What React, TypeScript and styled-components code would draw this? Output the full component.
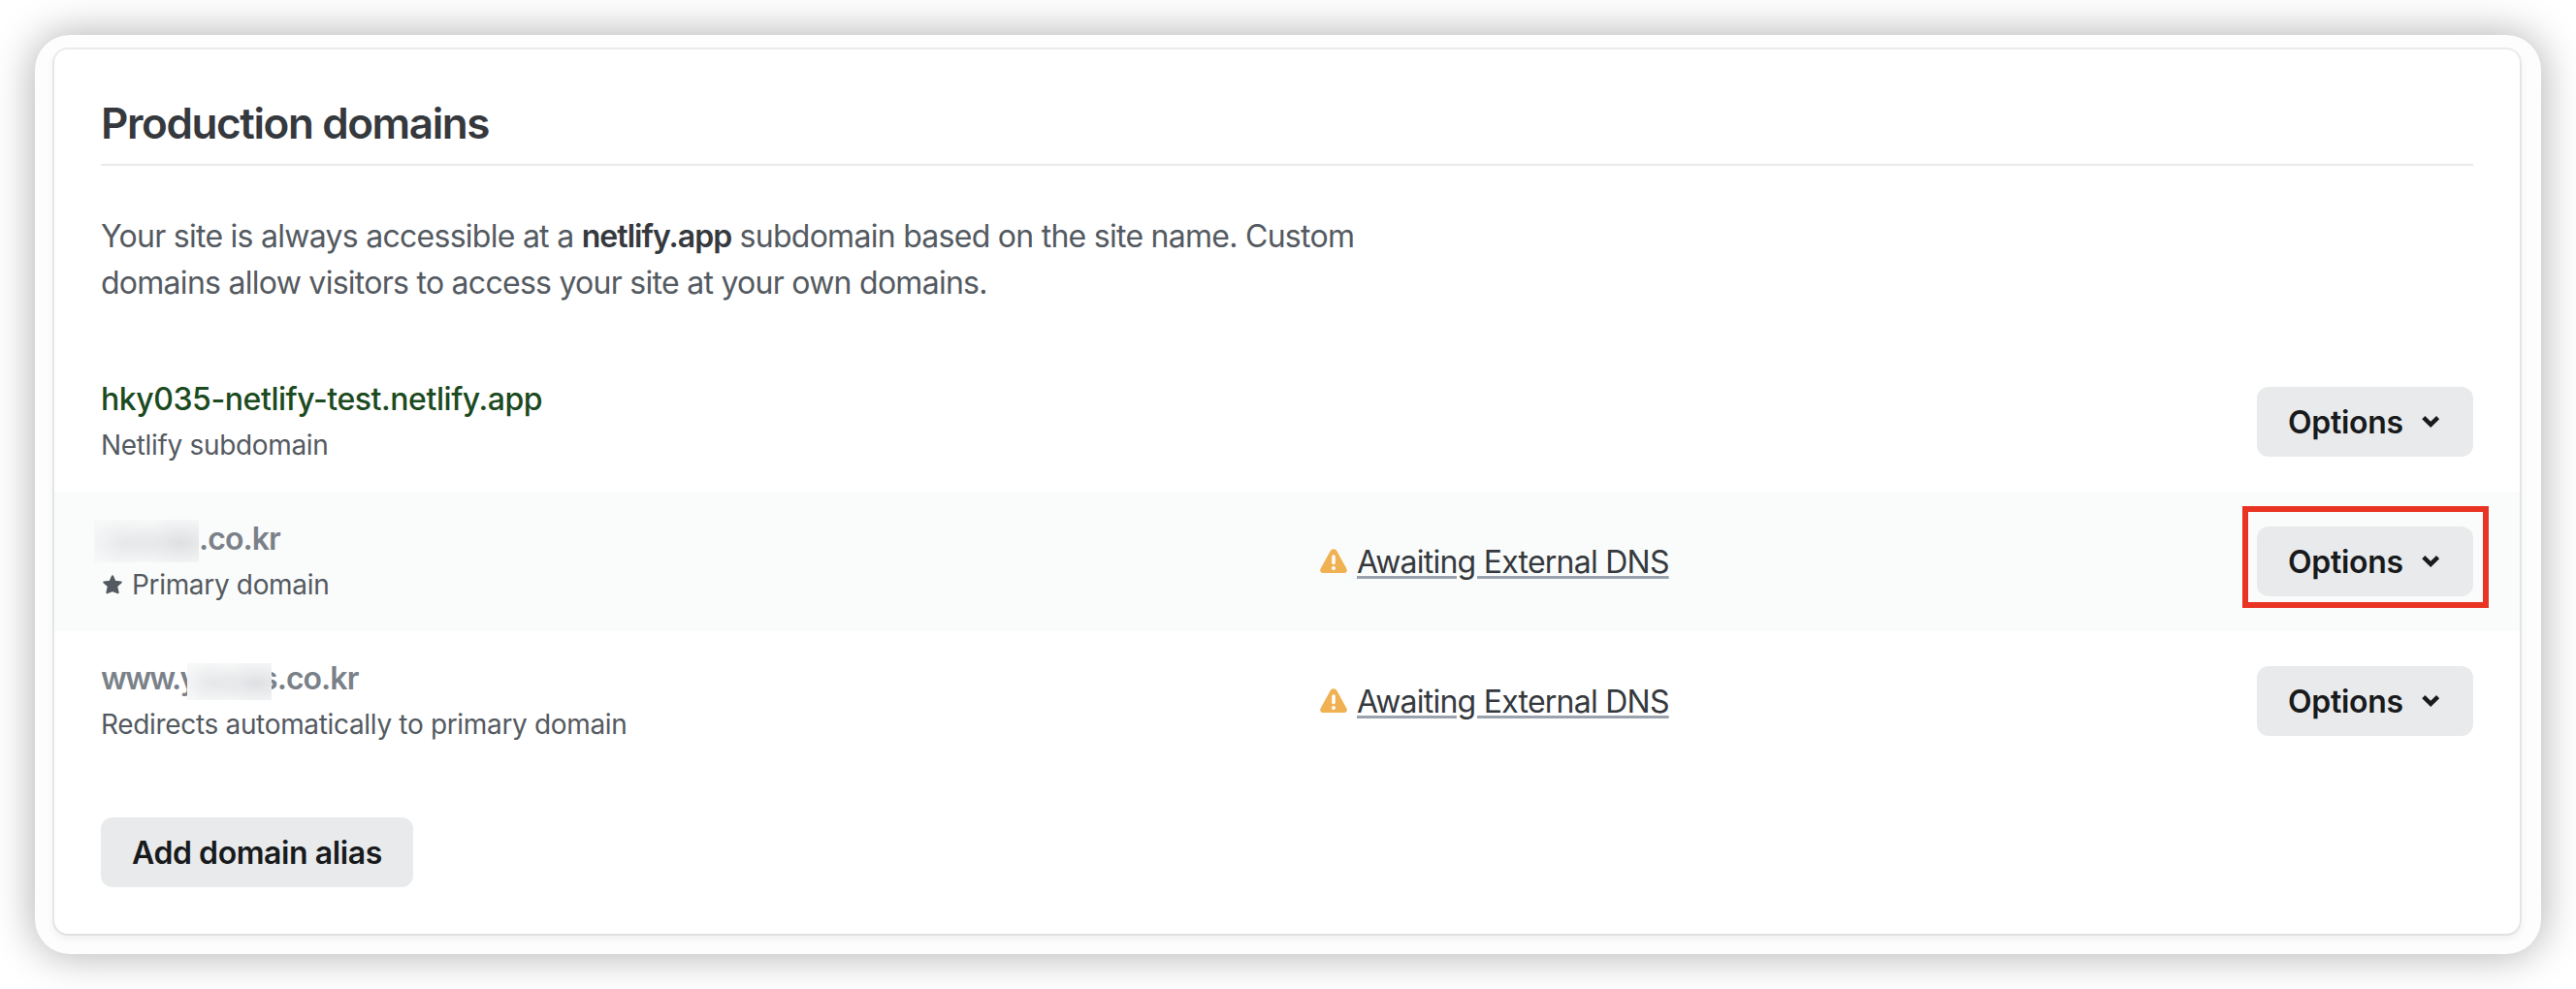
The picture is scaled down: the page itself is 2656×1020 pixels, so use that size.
import React from "react";
import styled, { createGlobalStyle } from "styled-components";

const GlobalStyle = createGlobalStyle`
  *, *::before, *::after { box-sizing: border-box; }
  body {
    margin: 0;
    background: #fff;
    font-family: Inter, "Liberation Sans", sans-serif;
    font-size: 32px;
    line-height: 48px;
    color: #545a61;
  }
`;

const Page = styled.div`
  height: 1020px;
  padding: 36px;
  overflow: hidden;
`;

const Frame = styled.div`
  height: 948px;
  padding: 15px 22px 21px 20px;
  border-radius: 36px;
  background: #fdfdfd;
  box-shadow: 0 0 44px rgba(0, 0, 0, 0.33);
`;

const Card = styled.section`
  display: flex;
  flex-direction: column;
  height: 912px;
  border-radius: 14px;
  background: #fff;
  box-shadow: 0 0 0 2px rgba(14, 30, 37, 0.07), 0 4px 8px rgba(14, 30, 37, 0.08);
`;

const Header = styled.header`
  margin: 0 48px;
  height: 120px;
  padding-top: 48px;
  border-bottom: 2px solid #e9ebeb;
`;

const Title = styled.h2`
  margin: 0;
  font-size: 44px;
  line-height: 56px;
  font-weight: 600;
  letter-spacing: -1.4px;
  color: #35393e;
`;

const Intro = styled.p`
  margin: 49px 48px 0;
  width: 1320px;
  height: 143px;
  letter-spacing: -0.73px;
`;

const Strong = styled.strong`
  font-weight: 600;
  letter-spacing: -0.95px;
  color: #35393e;
`;

const List = styled.ul`
  margin: 0;
  padding: 0;
  list-style: none;
`;

const Row = styled.li<{ $tinted?: boolean }>`
  display: grid;
  grid-template-columns: 1257px 1fr auto;
  align-items: center;
  height: 144px;
  padding: 0 48px;
  background: ${(p) => (p.$tinted ? "#fafcfb" : "transparent")};
`;

const Name = styled.div<{ $live?: boolean }>`
  display: flex;
  height: 48px;
  font-weight: ${(p) => (p.$live ? 500 : 600)};
  letter-spacing: ${(p) => (p.$live ? "-0.45px" : "-0.95px")};
  color: ${(p) => (p.$live ? "#1c4a20" : "#7a8189")};
`;

const Note = styled.div`
  display: flex;
  align-items: center;
  gap: 8px;
  height: 46px;
  font-size: 28px;
  letter-spacing: -0.33px;
`;

const Redacted = styled.span<{ $width: number }>`
  position: relative;
  width: ${(p) => p.$width}px;
  letter-spacing: -1.7px;
`;

const Smudge = styled.span<{ $left: number; $top: number; $width: number; $height: number; $base: string }>`
  position: absolute;
  left: ${(p) => p.$left}px;
  top: ${(p) => p.$top}px;
  width: ${(p) => p.$width}px;
  height: ${(p) => p.$height}px;
  background:
    radial-gradient(ellipse 36% 56% at 30% 54%, rgba(216, 218, 222, 0.55), transparent),
    radial-gradient(ellipse 52% 60% at 82% 54%, rgba(212, 214, 218, 0.7), transparent),
    ${(p) => p.$base};
`;

const Status = styled.div`
  display: flex;
  align-items: center;
  gap: 10px;
`;

const StatusLink = styled.a`
  padding-top: 1px;
  letter-spacing: -0.76px;
  color: #35393e;
  text-decoration: underline;
  text-decoration-color: #9ba4ae;
  text-decoration-thickness: 3px;
  text-underline-offset: 3px;
`;

const Button = styled.button`
  display: inline-flex;
  align-items: center;
  height: 72px;
  padding: 0 32px;
  border: 0;
  border-radius: 12px;
  background: #e9eaec;
  font: inherit;
  font-weight: 600;
  letter-spacing: -0.42px;
  color: #181a1c;
`;

const ButtonLabel = styled.span`
  padding-top: 1px;
`;

const OptionsSlot = styled.div`
  position: relative;
  display: flex;
  grid-column: 3;

  ${Button} {
    width: 223px;
    justify-content: space-between;
    letter-spacing: -0.3px;
  }
`;

const Highlight = styled.span`
  position: absolute;
  left: -15px;
  top: -21px;
  width: 254px;
  height: 105px;
  border: 6px solid #e93323;
`;

const Footer = styled.footer`
  padding: 48px;
`;

const Chevron = () => (
  <svg width="24" height="24" viewBox="0 0 24 24" fill="none" stroke="#181a1c" strokeWidth="4.4">
    <path d="M4.8 7.6 12.2 14.9 19.6 7.6" />
  </svg>
);

const Star = () => (
  <svg width="24" height="24" viewBox="0 0 24 24" fill="#545a61" stroke="#545a61" strokeWidth="2" strokeLinejoin="round">
    <path d="M12 3.2 14.6 8.8 20.8 9.4 16.2 13.6 17.7 20.2 12 18 6.3 20.2 7.8 13.6 3.2 9.4 9.4 8.8Z" />
  </svg>
);

const Warning = () => (
  <svg width="28" height="26" viewBox="0 0 28 26">
    <path d="M10.5 2.4C12-.4 16-.4 17.5 2.4L27.4 20.5C28.6 23 27.3 25 25 25H3C.7 25-.6 23 .6 20.5Z" fill="#efb152" />
    <path d="M14 8V14.5" stroke="#fff" strokeWidth="3.6" strokeLinecap="round" />
    <circle cx="14" cy="20" r="2" fill="#fff" />
  </svg>
);

const Options = ({ highlighted }: { highlighted?: boolean }) => (
  <OptionsSlot>
    <Button>
      <ButtonLabel>Options</ButtonLabel>
      <Chevron />
    </Button>
    {highlighted && <Highlight />}
  </OptionsSlot>
);

const AwaitingDns = () => (
  <Status>
    <Warning />
    <StatusLink>Awaiting External DNS</StatusLink>
  </Status>
);

export default function App() {
  return (
    <Page>
      <GlobalStyle />
      <Frame>
        <Card>
          <Header>
            <Title>Production domains</Title>
          </Header>
          <Intro>
            Your site is always accessible at a <Strong>netlify.app</Strong> subdomain based on the site name. Custom
            domains allow visitors to access your site at your own domains.
          </Intro>
          <List>
            <Row>
              <div>
                <Name $live>hky035-netlify-test.netlify.app</Name>
                <Note>Netlify subdomain</Note>
              </div>
              <Options />
            </Row>
            <Row $tinted>
              <div>
                <Name>
                  <Redacted $width={101}>
                    <Smudge $left={-7} $top={4} $width={108} $height={44} $base="#f6f8f8" />
                  </Redacted>
                  .co.kr
                </Name>
                <Note>
                  <Star />
                  Primary domain
                </Note>
              </div>
              <AwaitingDns />
              <Options highlighted />
            </Row>
            <Row>
              <div>
                <Name>
                  <Redacted $width={165}>
                    www.y
                    <Smudge $left={89} $top={8} $width={87} $height={38} $base="#f6f7f7" />
                  </Redacted>
                  s.co.kr
                </Name>
                <Note>Redirects automatically to primary domain</Note>
              </div>
              <AwaitingDns />
              <Options />
            </Row>
          </List>
          <Footer>
            <Button>
              <ButtonLabel>Add domain alias</ButtonLabel>
            </Button>
          </Footer>
        </Card>
      </Frame>
    </Page>
  );
}
